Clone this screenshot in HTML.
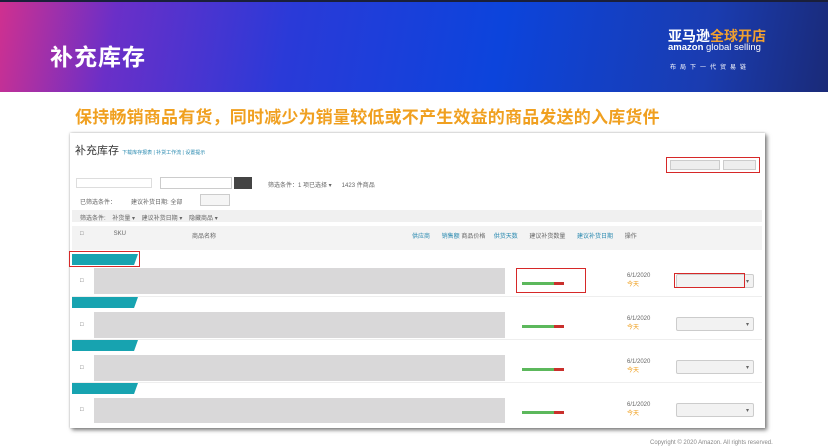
<!DOCTYPE html>
<html><head><meta charset="utf-8"><style>
*{margin:0;padding:0;box-sizing:border-box}
body{width:828px;height:448px;overflow:hidden;background:#fff;position:relative;font-family:"Liberation Sans","Noto Sans CJK SC",sans-serif}
.a{position:absolute}
.hdr{left:0;top:0;width:828px;height:92px;background:linear-gradient(100deg,#d0308f 0%,#6a2fc8 14%,#2a3ad8 35%,#0c44dc 60%,#1a3cb0 85%,#1a2a78 100%)}
.top{left:0;top:0;width:828px;height:2px;background:#1a1f3a}
.t{color:#fff}
.s{font-size:6px;color:#666}
.g{background:#d9d8d9}
.tag{background:#17a3b0;height:11px;width:66px;clip-path:polygon(0 0,100% 0,94% 100%,0 100%)}
.red{border:1.5px solid #d62828}
.dd{border:1px solid #ccc;background:#f2f2f2;height:14px;width:78px;border-radius:2px}
.line{height:1px;background:#eee;left:72px;width:690px}
</style></head><body>
<div class="a hdr"></div><div class="a top"></div>
<div class="a t" style="left:50px;top:38px;font-size:23px;font-weight:bold;letter-spacing:1px">补充库存</div>
<div class="a t" style="left:668px;top:26px;font-size:14px;font-weight:bold">亚马逊<span style="color:#f0a030">全球开店</span></div>
<div class="a t" style="left:668px;top:42px;font-size:9.5px"><b>amazon</b> global selling</div>
<div class="a t" style="left:670px;top:62px;font-size:6px;letter-spacing:4px">布局下一代贸易链</div>
<div class="a" style="left:75px;top:103px;font-size:17px;letter-spacing:0.2px;font-weight:bold;color:#f0a020;white-space:nowrap">保持畅销商品有货，同时减少为销量较低或不产生效益的商品发送的入库货件</div>
<div class="a" style="left:70px;top:133px;width:695px;height:295px;background:#fff;box-shadow:2px 2px 4px #777,0 0 2px #bbb"></div>
<div class="a" style="left:75px;top:142px;font-size:11px;color:#333">补充库存 <span style="font-size:5px;color:#2a8ab0">下载库存报表 | 补货工作流 | 设置提示</span></div>
<div class="a red" style="left:666px;top:157px;width:94px;height:16px"></div>
<div class="a" style="left:670px;top:160px;width:50px;height:10px;background:#eee;border:1px solid #ccc"></div>
<div class="a" style="left:723px;top:160px;width:33px;height:10px;background:#eee;border:1px solid #ccc"></div>
<div class="a" style="left:76px;top:178px;width:76px;height:10px;border:1px solid #ddd"></div>
<div class="a" style="left:160px;top:177px;width:72px;height:12px;border:1px solid #ccc"></div>
<div class="a" style="left:234px;top:177px;width:18px;height:12px;background:#444"></div>
<div class="a s" style="left:268px;top:180px">筛选条件：1 项已选择 ▾ &nbsp;&nbsp;&nbsp;&nbsp; 1423 件商品</div>
<div class="a s" style="left:80px;top:197px">已筛选条件： &nbsp;&nbsp;&nbsp;&nbsp;&nbsp;&nbsp;&nbsp; 建议补货日期: 全部</div>
<div class="a" style="left:200px;top:194px;width:30px;height:12px;border:1px solid #ccc;background:#f5f5f5"></div>
<div class="a" style="left:72px;top:210px;width:690px;height:12px;background:#f0f0f0"></div>
<div class="a s" style="left:80px;top:213px">筛选条件: &nbsp;&nbsp; 补货量 ▾ &nbsp;&nbsp; 建议补货日期 ▾ &nbsp;&nbsp; 隐藏商品 ▾</div>
<div class="a" style="left:72px;top:226px;width:690px;height:24px;background:#f3f3f3"></div>
<div class="a s" style="left:80px;top:231px">□ &nbsp;&nbsp;&nbsp;&nbsp;&nbsp;&nbsp;&nbsp;&nbsp;&nbsp;&nbsp;&nbsp;&nbsp;&nbsp;&nbsp;&nbsp;&nbsp; SKU</div>
<div class="a s" style="left:192px;top:231px">商品名称</div>
<div class="a s" style="left:412px;top:231px;color:#2a8ab0">供应商 &nbsp;&nbsp;&nbsp;&nbsp;&nbsp; 销售额 <span style="color:#666">商品价格</span> &nbsp;&nbsp;&nbsp; 供货天数 &nbsp;&nbsp;&nbsp;&nbsp;&nbsp; <span style="color:#666">建议补货数量</span> &nbsp;&nbsp;&nbsp;&nbsp;&nbsp; 建议补货日期 &nbsp;&nbsp;&nbsp;&nbsp;&nbsp; <span style="color:#666">操作</span></div>

<div class="a tag" style="left:72px;top:254px"></div>
<div class="a red" style="left:69px;top:251px;width:71px;height:16px"></div>
<div class="a g" style="left:94px;top:268px;width:411px;height:26px"></div>
<div class="a red" style="left:516px;top:268px;width:70px;height:25px"></div>

<div class="a tag" style="left:72px;top:297px"></div>
<div class="a g" style="left:94px;top:312px;width:411px;height:26px"></div>
<div class="a tag" style="left:72px;top:340px"></div>
<div class="a g" style="left:94px;top:355px;width:411px;height:26px"></div>
<div class="a tag" style="left:72px;top:383px"></div>
<div class="a g" style="left:94px;top:398px;width:411px;height:25px"></div>

<div class="a" style="left:522px;top:282px;width:32px;height:3px;background:#5cb85c"></div><div class="a" style="left:554px;top:282px;width:10px;height:3px;background:#c9302c"></div>
<div class="a" style="left:522px;top:325px;width:32px;height:3px;background:#5cb85c"></div><div class="a" style="left:554px;top:325px;width:10px;height:3px;background:#c9302c"></div>
<div class="a" style="left:522px;top:368px;width:32px;height:3px;background:#5cb85c"></div><div class="a" style="left:554px;top:368px;width:10px;height:3px;background:#c9302c"></div>
<div class="a" style="left:522px;top:411px;width:32px;height:3px;background:#5cb85c"></div><div class="a" style="left:554px;top:411px;width:10px;height:3px;background:#c9302c"></div>

<div class="a s" style="left:627px;top:273px">6/1/2020<br><span style="color:#f0a020">今天</span></div>
<div class="a s" style="left:627px;top:316px">6/1/2020<br><span style="color:#f0a020">今天</span></div>
<div class="a s" style="left:627px;top:359px">6/1/2020<br><span style="color:#f0a020">今天</span></div>
<div class="a s" style="left:627px;top:402px">6/1/2020<br><span style="color:#f0a020">今天</span></div>

<div class="a dd" style="left:676px;top:274px"></div>
<div class="a dd" style="left:676px;top:317px"></div>
<div class="a dd" style="left:676px;top:360px"></div>
<div class="a dd" style="left:676px;top:403px"></div>
<div class="a s" style="left:746px;top:278px">▾</div><div class="a s" style="left:746px;top:321px">▾</div><div class="a s" style="left:746px;top:364px">▾</div><div class="a s" style="left:746px;top:407px">▾</div>
<div class="a red" style="left:674px;top:273px;width:71px;height:15px"></div>
<div class="a s" style="left:80px;top:278px">□</div><div class="a s" style="left:80px;top:322px">□</div><div class="a s" style="left:80px;top:365px">□</div><div class="a s" style="left:80px;top:407px">□</div>
<div class="a line" style="top:296px"></div><div class="a line" style="top:339px"></div><div class="a line" style="top:382px"></div>
<div class="a" style="left:650px;top:440px;font-size:6px;color:#888">Copyright © 2020 Amazon. All rights reserved.</div>
</body></html>
